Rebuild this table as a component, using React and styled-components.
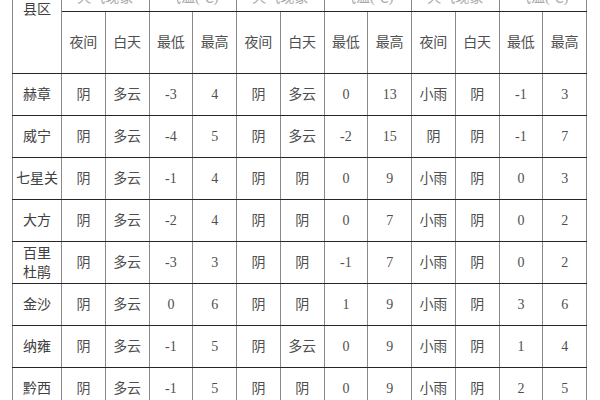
import React from 'react'
import styled, { createGlobalStyle } from 'styled-components'

const GlobalStyle = createGlobalStyle`
  html, body {
    margin: 0;
    padding: 0;
    background: #fff;
    overflow: hidden;
  }
`;

const dates = ['1月14日', '1月15日', '1月16日']

const rows = [
  { name: '赫章', v: ['阴', '多云', '-3', '4', '阴', '多云', '0', '13', '小雨', '阴', '-1', '3'] },
  { name: '威宁', v: ['阴', '多云', '-4', '5', '阴', '多云', '-2', '15', '阴', '阴', '-1', '7'] },
  { name: '七星关', v: ['阴', '多云', '-1', '4', '阴', '阴', '0', '9', '小雨', '阴', '0', '3'] },
  { name: '大方', v: ['阴', '多云', '-2', '4', '阴', '阴', '0', '7', '小雨', '阴', '0', '2'] },
  { name: ['百里', '杜鹃'], v: ['阴', '多云', '-3', '3', '阴', '阴', '-1', '7', '小雨', '阴', '0', '2'] },
  { name: '金沙', v: ['阴', '多云', '0', '6', '阴', '阴', '1', '9', '小雨', '阴', '3', '6'] },
  { name: '纳雍', v: ['阴', '多云', '-1', '5', '阴', '多云', '0', '9', '小雨', '阴', '1', '4'] },
  { name: '黔西', v: ['阴', '多云', '-1', '5', '阴', '阴', '0', '9', '小雨', '阴', '2', '5'] },
]

function App() {
  return (
    <Page>
      <GlobalStyle />
      <Table>
        <colgroup>
          <col style={{ width: 49 }} />
          {Array.from({ length: 12 }).map((_, i) => <col key={i} style={{ width: 43.75 }} />)}
        </colgroup>
        <tbody>
          <tr>
            <NameHead rowSpan={3}>县区</NameHead>
            {dates.map((d) => <GroupCell key={d} colSpan={4} $h={27}>{d}</GroupCell>)}
          </tr>
          <tr>
            {dates.map((d) => (
              <React.Fragment key={d}>
                <GroupCell colSpan={2} $h={27}>天气现象</GroupCell>
                <GroupCell colSpan={2} $h={27}>气温(℃)</GroupCell>
              </React.Fragment>
            ))}
          </tr>
          <tr>
            {dates.map((d) => (
              <React.Fragment key={d}>
                <Cell $h={61}>夜间</Cell>
                <Cell $h={61}>白天</Cell>
                <Cell $h={61}>最低</Cell>
                <Cell $h={61}>最高</Cell>
              </React.Fragment>
            ))}
          </tr>
          {rows.map((r, i) => (
            <tr key={i}>
              <NameCell $h={41}>
                {Array.isArray(r.name) ? <>{r.name[0]}<br />{r.name[1]}</> : r.name}
              </NameCell>
              {r.v.map((x, j) => <Cell key={j} $h={41}>{x}</Cell>)}
            </tr>
          ))}
        </tbody>
      </Table>
    </Page>
  )
}

export default App

const Page = styled.div`
    width: 600px;
    height: 400px;
    overflow: hidden;
    padding-left: 12px;
    box-sizing: border-box;
    background: #fff;
`;
const Table = styled.table`
    table-layout: fixed;
    border-collapse: collapse;
    width: 574px;
    margin-top: -55px;
    font-family: 'Liberation Serif', 'Noto Sans CJK SC', serif;
    font-size: 14px;
    color: #4f4f4f;
`;
const Cell = styled.td`
    height: ${(p) => p.$h}px;
    padding: 0;
    text-align: center;
    vertical-align: middle;
    border-top: 1px solid #262626;
    border-bottom: 1px solid #262626;
    border-left: 1px solid #8a8a8a;
    border-right: 1px solid #8a8a8a;
    line-height: 19px;
    white-space: nowrap;
`;
const GroupCell = styled(Cell)`
    color: #a8a8a8;
    padding-top: 5px;
`;
const NameCell = styled(Cell)`
    color: #404040;
`;
const NameHead = styled(Cell)`
    color: #404040;
`;
